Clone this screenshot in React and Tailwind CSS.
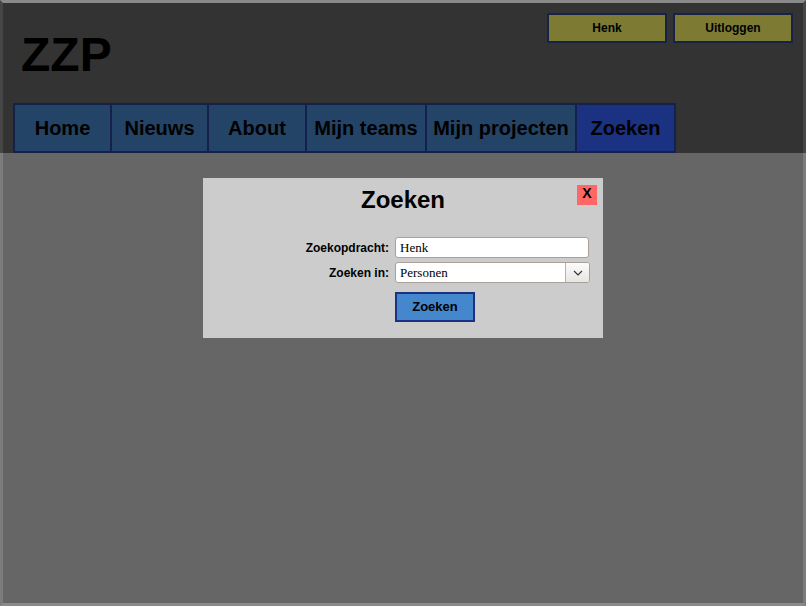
import React from "react";

const tabs = [
  { label: "Home", w: "w-[99px]" },
  { label: "Nieuws", w: "w-[97px]" },
  { label: "About", w: "w-[98px]" },
  { label: "Mijn teams", w: "w-[120px]" },
  { label: "Mijn projecten", w: "w-[150px]" },
  { label: "Zoeken", w: "w-[99px]", active: true },
];

export default function App() {
  return (
    <div className="w-full h-[606px] flex flex-col font-['Liberation_Sans',Arial,sans-serif] text-black">
      {/* Header */}
      <header className="h-[153px] shrink-0 bg-[#333333] border-t-[3px] border-x-[3px] border-t-[#8a8a8a] border-x-[#464646] pl-[10px] pr-[10px] pt-[10px] flex flex-col">
        <div className="flex justify-between items-start h-[70px]">
          <h1 className="ml-[8px] mt-[18px] text-[48px] leading-[48px] font-bold">ZZP</h1>
          <div className="flex gap-[6px]">
            <HeaderButton>Henk</HeaderButton>
            <HeaderButton>Uitloggen</HeaderButton>
          </div>
        </div>

        <nav className="mt-[20px] flex">
          {tabs.map((t, i) => (
            <a
              key={t.label}
              href="#"
              className={`${t.w} h-[50px] flex items-center justify-center border-y-2 border-r-2 border-[#14214d] text-[20px] font-bold whitespace-nowrap ${
                i === 0 ? "border-l-2" : ""
              } ${t.active ? "bg-[#1b3181]" : "bg-[#234466]"}`}
            >
              {t.label}
            </a>
          ))}
        </nav>
      </header>

      {/* Content */}
      <main className="flex-1 bg-[#666666] border-x-[3px] border-b-[3px] border-x-[#7c7c7c] border-b-[#8a8a8a] pt-[25px]">
        <div className="relative mx-auto w-[400px] bg-[#cccccc] pt-[8px] pb-[16px]">
          <button className="absolute top-[7px] right-[6px] w-[20px] h-[20px] bg-[#ff6666] text-[14px] leading-[16px] font-bold flex justify-center">
            X
          </button>
          <h2 className="text-center text-[24px] leading-[28px] font-bold">Zoeken</h2>

          <div className="mt-[23px] grid grid-cols-[186px_196px] gap-x-[6px] gap-y-[4px] items-center">
            <label className="text-right text-[12px] font-bold">Zoekopdracht:</label>
            <input
              defaultValue="Henk"
              className="w-[194px] h-[21px] bg-white border border-[#a8a099] rounded-[3px] px-[4px] text-[13px] font-['Liberation_Serif',serif] outline-none"
            />

            <label className="text-right text-[12px] font-bold">Zoeken in:</label>
            <div className="relative w-[195px] h-[21px]">
              <select
                defaultValue="Personen"
                className="appearance-none block w-full h-full bg-white border border-[#a8a099] rounded-[3px] pl-[4px] py-0 leading-[17px] text-[13px] font-['Liberation_Serif',serif] outline-none"
              >
                <option>Personen</option>
                <option>Teams</option>
                <option>Projecten</option>
              </select>
              <span className="pointer-events-none absolute top-[1px] right-[1px] bottom-[1px] w-[24px] border-l border-[#b8b2ac] rounded-r-[2px] bg-gradient-to-b from-[#fbfbfb] to-[#e8e6e2] flex items-center justify-center">
                <svg width="10" height="6" viewBox="0 0 10 6" fill="none" stroke="#333" strokeWidth="1.2">
                  <path d="M1 1l4 4 4-4" />
                </svg>
              </span>
            </div>

            <div />
            <button className="mt-[5px] w-[80px] h-[30px] bg-[#4487cc] border-2 border-[#1b3181] text-[13px] font-bold">
              Zoeken
            </button>
          </div>
        </div>
      </main>
    </div>
  );
}

const HeaderButton = ({ children }) => (
  <button className="w-[120px] h-[30px] bg-[#7d7b33] border-2 border-[#16224a] text-[12px] font-bold">
    {children}
  </button>
);
